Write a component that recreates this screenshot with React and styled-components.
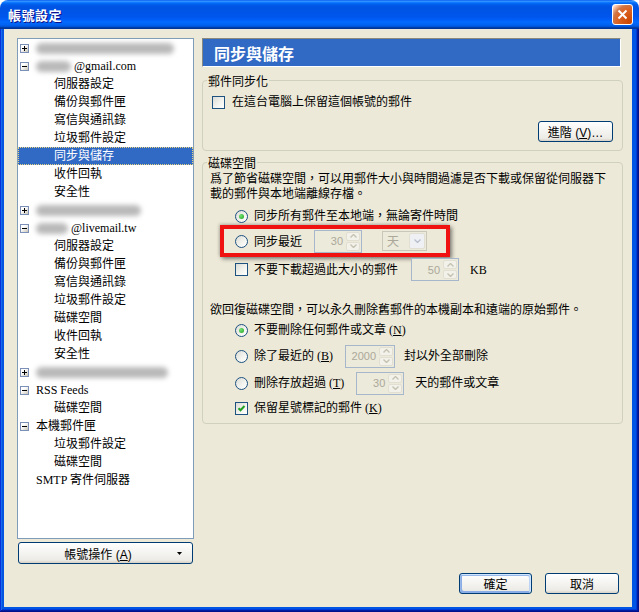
import React from 'react';
import styled, { createGlobalStyle, css } from 'styled-components';

const FONT = `"Liberation Serif", "Noto Sans CJK TC", serif`;
const UI_FONT = `"Liberation Sans", "Noto Sans CJK TC", sans-serif`;

const GlobalStyle = createGlobalStyle`
    html, body {
        margin: 0;
        padding: 0;
        background: #fff;
    }
    body {
        font-family: ${FONT};
        font-size: 12px;
        color: #000;
    }
    * {
        box-sizing: border-box;
    }
`;

const Window = styled.div`
    width: 639px;
    height: 612px;
    display: flex;
    flex-direction: column;
`;

const TitleBar = styled.div`
    height: 29px;
    flex: none;
    display: flex;
    align-items: center;
    justify-content: space-between;
    padding: 0 6px 0 8px;
    border-radius: 8px 8px 0 0;
    background: linear-gradient(180deg, #0058ee 0%, #3a93ff 4%, #288eff 6%, #127dff 8%, #036ffc 10%,
        #0262ee 14%, #0057e5 20%, #0054e3 24%, #0055eb 56%, #005bf5 66%, #026afe 76%,
        #0062ef 86%, #0052d6 92%, #0040ab 94%, #003092 100%);
`;

const TitleText = styled.div`
    font-family: "Noto Sans CJK TC", sans-serif;
    font-size: 13px;
    font-weight: 700;
    color: #fff;
    letter-spacing: 0.5px;
    text-shadow: 1px 1px #0f1089;
`;

const CloseButton = styled.div`
    width: 21px;
    height: 21px;
    border: 1px solid #fff;
    border-radius: 3px;
    display: flex;
    align-items: center;
    justify-content: center;
    background: radial-gradient(circle at 90% 90%, #cc4600 0%, #dc6527 55%, #cd7546 70%, #ffccb2 90%, #fff 100%);
`;

const Frame = styled.div`
    flex: 1;
    display: flex;
    padding: 0 7px 5px 4px;
    background: #0055e5;
    box-shadow: inset -1px -1px #00138c, inset 1px 0 #0831d9, inset -2px -2px #001ea0,
        inset 2px 0 #166aee, inset -3px -3px #003bda, inset 3px 0 #0855dd;
`;

const Body = styled.div`
    flex: 1;
    display: flex;
    gap: 8px;
    padding: 9px 9px 13px 13px;
    background: #ece9d8;
`;

const LeftCol = styled.div`
    width: 177px;
    display: flex;
    flex-direction: column;
`;

const Tree = styled.div`
    height: 501px;
    border: 1px solid #7f9db9;
    background: #fff;
`;

const TreeRow = styled.div`
    height: 18px;
    display: flex;
    align-items: center;
    white-space: nowrap;
    line-height: 18px;
    padding-left: ${p => (p.$level === 1 ? 36 : p.$exp ? 2 : 18)}px;
    ${p => p.$selected && css`
        background: #316ac5;
        color: #fff;
        outline: 1px dotted #e9d27e;
        outline-offset: -1px;
    `}
`;

const ExpanderBox = styled.svg`
    flex: none;
    margin-right: 7px;
`;

const Blob = styled.span`
    display: inline-block;
    width: ${p => p.$w}px;
    height: 11px;
    margin-right: ${p => p.$mr || 0}px;
    background: #b9b9b9;
    border-radius: 6px;
    filter: blur(2.5px);
`;

const AccountButton = styled.button`
    margin-top: 3px;
    margin-left: 1px;
    width: 175px;
    height: 22px;
    padding: 0 10px 0 0;
    display: flex;
    align-items: center;
    font-family: ${UI_FONT};
    font-size: 12px;
    color: #000;
    border: 1px solid #003c74;
    border-radius: 3px;
    background: linear-gradient(180deg, #fff, #ecebe6 86%, #d6d0c5);
`;

const ButtonLabel = styled.span`
    flex: 1;
    text-align: center;
`;

const RightCol = styled.div`
    flex: 1;
    display: flex;
    flex-direction: column;
`;

const PanelHeader = styled.div`
    height: 29px;
    margin-right: 2px;
    padding-left: 11px;
    display: flex;
    align-items: center;
    background: #316ac5;
    border: 1px solid;
    border-color: #8a897d #fff #fff #8a897d;
    font-family: "Noto Sans CJK TC", sans-serif;
    font-size: 16px;
    font-weight: 700;
    color: #fff;
`;

const Group = styled.fieldset`
    margin: ${p => p.$mt}px 0 0;
    padding: 0 7px ${p => p.$pb}px 7px;
    border: 1px solid #d0d0bf;
    border-radius: 4px;
    min-width: 0;
`;

const Legend = styled.legend`
    padding: 3px 1px 0;
    margin-left: -3px;
    line-height: 12px;
`;

const Row = styled.div`
    display: flex;
    align-items: center;
    height: ${p => p.$h || 18}px;
    margin-top: ${p => p.$mt || 0}px;
    margin-left: ${p => p.$indent || 0}px;
    white-space: nowrap;
    line-height: 14px;
`;

const Desc = styled.div`
    margin-top: ${p => p.$mt || 0}px;
    line-height: 15px;
    white-space: nowrap;
`;

const Text = styled.span`
    margin-left: ${p => p.$ml || 0}px;
`;

const Box = styled.span`
    flex: none;
    width: 13px;
    height: 13px;
    display: inline-flex;
    align-items: center;
    justify-content: center;
    border: 1px solid #1c5180;
    border-radius: ${p => (p.$round ? '50%' : '0')};
    background: linear-gradient(135deg, #dcdcd7 0%, #f4f4f0 60%, #fff 100%);
    margin-right: ${p => p.$gap || 6}px;
`;

const Dot = styled.span`
    width: 5px;
    height: 5px;
    border-radius: 50%;
    background: radial-gradient(circle at 35% 35%, #72e272, #21a121);
`;

const Spinner = styled.div`
    flex: none;
    width: ${p => p.$w}px;
    height: 23px;
    margin-left: ${p => p.$ml || 0}px;
    display: flex;
    border: 1px solid #a6b6cb;
    background: #ebeadb;
`;

const SpinValue = styled.div`
    flex: 1;
    display: flex;
    align-items: center;
    justify-content: flex-end;
    padding-right: 3px;
    font-family: "Liberation Sans", "DejaVu Sans", sans-serif;
    font-size: 11px;
    color: #aca899;
`;

const SpinButtons = styled.div`
    width: 15px;
    display: flex;
    flex-direction: column;
    padding: 1px 1px 1px 0;
    gap: 1px;
`;

const SpinHalf = styled.div`
    flex: 1;
    display: flex;
    align-items: center;
    justify-content: center;
    border: 1px solid #e2dfd2;
    border-radius: 2px;
    background: #f2f1ea;
`;

const Select = styled.div`
    flex: none;
    width: 45px;
    height: 20px;
    margin-left: 20px;
    display: flex;
    align-items: center;
    border: 1px solid #c9c7ba;
    background: #ebeadb;
    padding: 1px;
`;

const SelectValue = styled.span`
    flex: 1;
    padding-left: 3px;
    color: #aca899;
`;

const SelectButton = styled.span`
    width: 16px;
    height: 16px;
    display: flex;
    align-items: center;
    justify-content: center;
    border: 1px solid #e2dfd2;
    border-radius: 2px;
    background: #eef0f4;
`;

const Highlight = styled.div`
    width: 230px;
    height: 32px;
    margin-left: 10px;
    padding-left: 11px;
    display: flex;
    align-items: center;
    border: 4px solid #f01111;
    box-shadow: 2px 2px 4px rgba(0, 0, 0, 0.45), -1px -1px 3px rgba(0, 0, 0, 0.2);
    white-space: nowrap;
`;

const ButtonRow = styled.div`
    display: flex;
    justify-content: flex-end;
    margin-top: ${p => p.$mt || 0}px;
    padding-right: ${p => p.$pr || 0}px;
    gap: 13px;
`;

const Footer = styled(ButtonRow)`
    margin-top: auto;
`;

const Button = styled.button`
    width: ${p => p.$w}px;
    height: 21px;
    padding: 0;
    font-family: ${UI_FONT};
    font-size: 12px;
    color: #000;
    border: 1px solid #003c74;
    border-radius: 3px;
    background: linear-gradient(180deg, #fff, #ecebe6 86%, #d6d0c5);
    ${p => p.$default && css`
        box-shadow: inset -1px 1px #cee7ff, inset 1px 2px #98b8ea, inset -2px 2px #bcd4f6,
            inset 1px -1px #89ade4, inset 2px -2px #89ade4;
    `}
`;

const Expander = ({ plus }) => (
    <ExpanderBox width="9" height="9" viewBox="0 0 9 9">
        <defs>
            <linearGradient id="expg" x1="0" y1="0" x2="1" y2="1">
                <stop offset="0.35" stopColor="#fff" />
                <stop offset="1" stopColor="#c4c0ae" />
            </linearGradient>
        </defs>
        <rect x="0.5" y="0.5" width="8" height="8" fill="url(#expg)" stroke="#7b8fb8" />
        <path d="M2 4.5h5" stroke="#000" />
        {plus && <path d="M4.5 2v5" stroke="#000" />}
    </ExpanderBox>
);

const CheckBox = ({ checked, gap }) => (
    <Box $gap={gap}>
        {checked && (
            <svg width="9" height="9" viewBox="0 0 9 9">
                <path d="M1.5 4.2l2 2 4-4.2" fill="none" stroke="#21a121" strokeWidth="2" />
            </svg>
        )}
    </Box>
);

const Radio = ({ checked }) => (
    <Box $round>{checked && <Dot />}</Box>
);

const Arrow = ({ up, color = '#c5c2b2' }) => (
    <svg width="7" height="4" viewBox="0 0 7 4">
        <path d={up ? 'M0.5 3.5l3-3 3 3' : 'M0.5 0.5l3 3 3-3'} fill="none" stroke={color} strokeWidth="1.4" />
    </svg>
);

const SpinBox = ({ value, w, ml }) => (
    <Spinner $w={w} $ml={ml}>
        <SpinValue>{value}</SpinValue>
        <SpinButtons>
            <SpinHalf><Arrow up /></SpinHalf>
            <SpinHalf><Arrow /></SpinHalf>
        </SpinButtons>
    </Spinner>
);

const treeItems = [
    { exp: 'plus', blob: 138 },
    { exp: 'minus', blob: 35, text: '@gmail.com' },
    { level: 1, text: '伺服器設定' },
    { level: 1, text: '備份與郵件匣' },
    { level: 1, text: '寫信與通訊錄' },
    { level: 1, text: '垃圾郵件設定' },
    { level: 1, text: '同步與儲存', selected: true },
    { level: 1, text: '收件回執' },
    { level: 1, text: '安全性' },
    { exp: 'plus', blob: 105 },
    { exp: 'minus', blob: 32, text: '@livemail.tw' },
    { level: 1, text: '伺服器設定' },
    { level: 1, text: '備份與郵件匣' },
    { level: 1, text: '寫信與通訊錄' },
    { level: 1, text: '垃圾郵件設定' },
    { level: 1, text: '磁碟空間' },
    { level: 1, text: '收件回執' },
    { level: 1, text: '安全性' },
    { exp: 'plus', blob: 132 },
    { exp: 'minus', text: 'RSS Feeds' },
    { level: 1, text: '磁碟空間' },
    { exp: 'minus', text: '本機郵件匣' },
    { level: 1, text: '垃圾郵件設定' },
    { level: 1, text: '磁碟空間' },
    { text: 'SMTP 寄件伺服器' },
];

const App = () => {
    return (
        <>
            <GlobalStyle />
            <Window>
                <TitleBar>
                    <TitleText>帳號設定</TitleText>
                    <CloseButton>
                        <svg width="11" height="11" viewBox="0 0 11 11">
                            <path d="M1.5 1.5l8 8M9.5 1.5l-8 8" stroke="#fff" strokeWidth="2" />
                        </svg>
                    </CloseButton>
                </TitleBar>
                <Frame>
                    <Body>
                        <LeftCol>
                            <Tree>
                                {treeItems.map((item, i) => (
                                    <TreeRow key={i} $level={item.level} $exp={item.exp} $selected={item.selected}>
                                        {item.exp && <Expander plus={item.exp === 'plus'} />}
                                        {item.blob && <Blob $w={item.blob} $mr={item.text ? 3 : 0} />}
                                        {item.text}
                                    </TreeRow>
                                ))}
                            </Tree>
                            <AccountButton>
                                <ButtonLabel>帳號操作 (<u>A</u>)</ButtonLabel>
                                <svg width="5" height="3" viewBox="0 0 5 3">
                                    <path d="M0 0h5L2.5 3z" fill="#000" />
                                </svg>
                            </AccountButton>
                        </LeftCol>
                        <RightCol>
                            <PanelHeader>同步與儲存</PanelHeader>

                            <Group $mt={6} $pb={8}>
                                <Legend>郵件同步化</Legend>
                                <Row $h={16} $mt={6} $indent={2}>
                                    <CheckBox gap={7} />
                                    在這台電腦上保留這個帳號的郵件
                                </Row>
                                <ButtonRow $mt={11} $pr={2}>
                                    <Button $w={75}>進階 (<u>V</u>)…</Button>
                                </ButtonRow>
                            </Group>

                            <Group $mt={4} $pb={6}>
                                <Legend>磁碟空間</Legend>
                                <Desc $mt={2}>
                                    爲了節省磁碟空間，可以用郵件大小與時間過濾是否下載或保留從伺服器下<br />
                                    載的郵件與本地端離線存檔。
                                </Desc>
                                <Row $mt={5} $indent={25}>
                                    <Radio checked />
                                    同步所有郵件至本地端，無論寄件時間
                                </Row>
                                <Highlight>
                                    <Radio />
                                    同步最近
                                    <SpinBox value="30" w={48} ml={12} />
                                    <Select>
                                        <SelectValue>天</SelectValue>
                                        <SelectButton><Arrow color="#b9bfcc" /></SelectButton>
                                    </Select>
                                </Highlight>
                                <Row $h={23} $mt={1} $indent={25}>
                                    <CheckBox />
                                    不要下載超過此大小的郵件
                                    <SpinBox value="50" w={48} ml={13} />
                                    <Text $ml={11}>KB</Text>
                                </Row>
                                <Desc $mt={22}>欲回復磁碟空間，可以永久刪除舊郵件的本機副本和遠端的原始郵件。</Desc>
                                <Row $mt={3} $indent={25}>
                                    <Radio checked />
                                    不要刪除任何郵件或文章 (<u>N</u>)
                                </Row>
                                <Row $h={24} $mt={5} $indent={25}>
                                    <Radio />
                                    除了最近的 (<u>B</u>)
                                    <SpinBox value="2000" w={50} ml={12} />
                                    <Text $ml={9}>封以外全部刪除</Text>
                                </Row>
                                <Row $h={24} $mt={3} $indent={25}>
                                    <Radio />
                                    刪除存放超過 (<u>T</u>)
                                    <SpinBox value="30" w={48} ml={12} />
                                    <Text $ml={11}>天的郵件或文章</Text>
                                </Row>
                                <Row $mt={4} $indent={25}>
                                    <CheckBox checked />
                                    保留星號標記的郵件 (<u>K</u>)
                                </Row>
                            </Group>

                            <Footer $pr={4}>
                                <Button $w={73} $default>確定</Button>
                                <Button $w={74}>取消</Button>
                            </Footer>
                        </RightCol>
                    </Body>
                </Frame>
            </Window>
        </>
    );
};

export default App;
